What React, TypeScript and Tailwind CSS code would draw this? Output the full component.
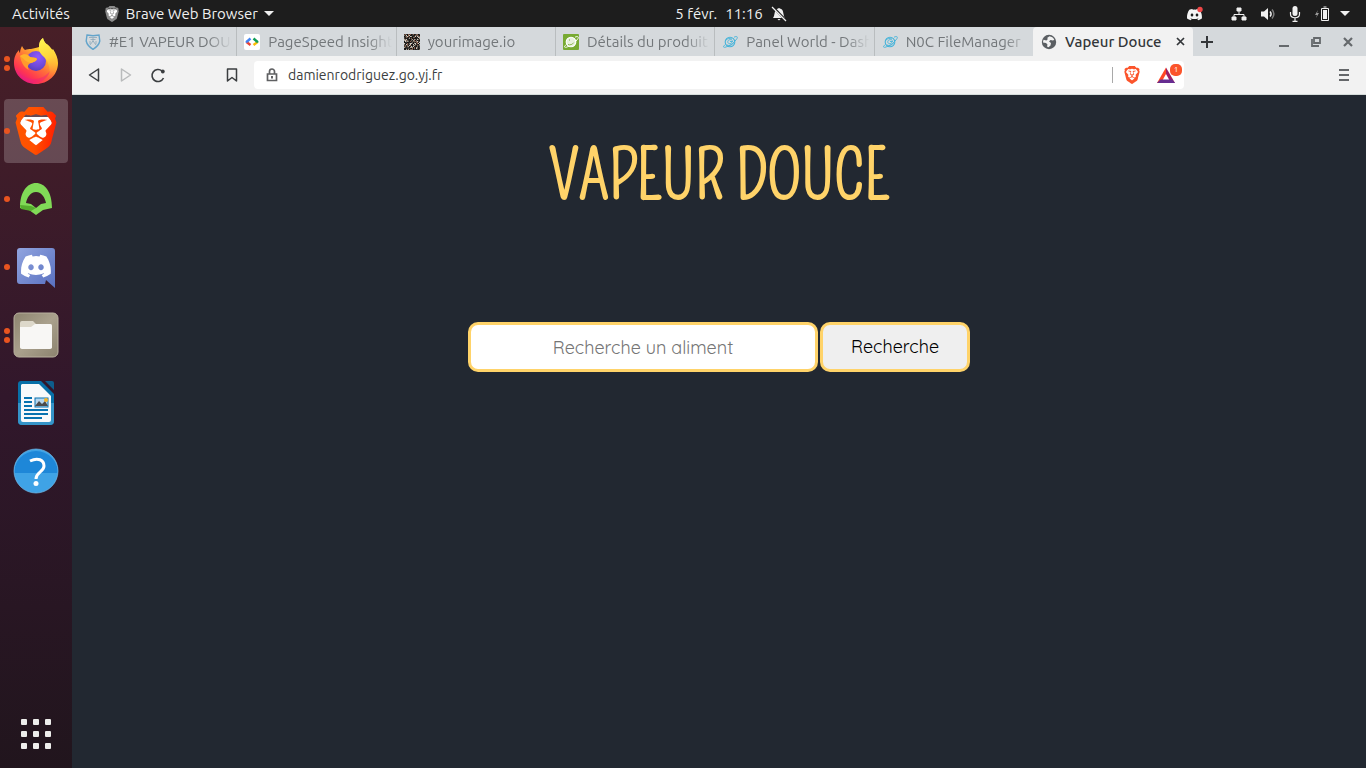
import type { ReactNode } from "react";
import { SiBrave } from "react-icons/si";

function BraveLogo({ size, fill }: { size: number; fill: string }) {
  return (
    <svg width={size} height={size} viewBox="0 0 24 24" aria-hidden="true">
      <defs>
        <linearGradient id="braveOrange" x1="0" y1="0.3" x2="1" y2="0.4">
          <stop offset="0" stopColor="#ff5601" />
          <stop offset="0.5" stopColor="#ff5000" />
          <stop offset="1" stopColor="#ff1f01" />
        </linearGradient>
      </defs>
      <path d="M5 5h14l1 3-2 9-6 4-6-4-2-9z" fill="#fff" />
      <SiBrave size={24} fill={fill} />
    </svg>
  );
}

function FirefoxLogo() {
  return (
    <svg width="46" height="48" viewBox="0 0 46 48" className="-mt-1" aria-hidden="true">
      <defs>
        <linearGradient id="ffBody" x1="0.85" y1="0.1" x2="0.25" y2="1">
          <stop offset="0" stopColor="#fff44f" />
          <stop offset="0.3" stopColor="#ffbd2d" />
          <stop offset="0.55" stopColor="#ff7139" />
          <stop offset="0.8" stopColor="#ff3750" />
          <stop offset="1" stopColor="#e31587" />
        </linearGradient>
        <linearGradient id="ffTail" x1="0.4" y1="0" x2="0.6" y2="1">
          <stop offset="0" stopColor="#fff44f" />
          <stop offset="0.5" stopColor="#ffd43a" />
          <stop offset="1" stopColor="#ff9640" stopOpacity="0" />
        </linearGradient>
        <radialGradient id="ffGlobe" cx="0.6" cy="0.3" r="0.8">
          <stop offset="0" stopColor="#9059ff" />
          <stop offset="0.6" stopColor="#6f4ad8" />
          <stop offset="1" stopColor="#4c3eb5" />
        </radialGradient>
      </defs>
      <path d="M9 9c1 2 2 3 3 4 2-1 4-1 6-1 3-1 6-1 8-2 0-4 1-7 4-9 1 5 4 6 6 8 1 1 2 3 3 4l1-1c3 5 5 9 5 14C45 38 35 47 23 47S1 38 1 26c0-6 2-10 5-13 0 1 0 2 1 3 0-3 1-5 2-7z" fill="url(#ffBody)" />
      <circle cx="23" cy="24" r="10" fill="url(#ffGlobe)" />
      <path d="M30 1c1 5 4 6 6 8 6 6 8 14 6 22-1 5-4 8-7 10 2-5 2-10 0-15-2-7-10-8-9-16 0-4 1-7 4-9z" fill="url(#ffTail)" />
      <path d="M7 19c4-3 8-2 10 1 3 1 6 0 7 2-1 3-4 3-6 4-3 1-4 4-2 7-5-2-8-8-9-14z" fill="#ff9a2c" />
      <path d="M7 19c4-3 8-2 10 1 3 1 6 0 7 2-1 3-4 3-6 4-4 0-7-4-11-7z" fill="#ffb32c" />
      <path d="M3 31c3 7 10 11 17 11 8 0 13-3 17-8-3 9-10 12-17 12C12 45 5 40 3 31z" fill="#ed217f" opacity=".45" />
    </svg>
  );
}

function HoodLogo() {
  return (
    <svg width="34" height="34" viewBox="0 0 34 34" aria-hidden="true">
      <path d="M17 1C8 1 1 10 1 26l9 2 7 5 7-5 9-2C33 10 26 1 17 1zm0 9c6 0 9 6 10 11l-5 1-5 4-5-4-5-1c1-5 4-11 10-11z" fill="#81da57" />
      <path d="M1 23l11 1 5 2-5 3-10-2z" fill="#56ad2e" />
    </svg>
  );
}

const DISCORD_FACE =
  "M20.3 4.4A19.8 19.8 0 0 0 15.4 3l-.6 1.3a18 18 0 0 0-5.5 0L8.7 3a19.8 19.8 0 0 0-5 1.4C.5 9.1-.3 13.7.1 18.2a20 20 0 0 0 6 3l1.3-2-2-1 .5-.4c3.900 1.800 8.200 1.800 12.100 0l.5.4-2 1 1.300 2a20 20 0 0 0 6-3c.5-5.200-.8-9.700-3.500-13.800zM8 15.300c-1.200 0-2.200-1.100-2.200-2.400S6.800 10.500 8 10.500s2.200 1.100 2.200 2.400-1 2.400-2.200 2.400zm8 0c-1.200 0-2.200-1.100-2.200-2.400s1-2.400 2.200-2.400 2.200 1.100 2.200 2.400-1 2.400-2.200 2.400z";

function DiscordLogo() {
  return (
    <svg width="40" height="42" viewBox="0 0 40 42" aria-hidden="true">
      <defs>
        <linearGradient id="discordBg" x1="0" y1="0" x2="1" y2="1">
          <stop offset="0" stopColor="#91a4df" />
          <stop offset="1" stopColor="#5870c0" />
        </linearGradient>
      </defs>
      <path d="M4 2h32a3 3 0 0 1 3 3v37l-9-8-1 4H4a3 3 0 0 1-3-3V5a3 3 0 0 1 3-3z" fill="url(#discordBg)" />
      <svg x="5" y="5" width="30" height="30" viewBox="0 0 24 24">
        <path d={DISCORD_FACE} fill="#fff" />
      </svg>
    </svg>
  );
}

function FilesLogo() {
  return (
    <svg width="46" height="46" viewBox="0 0 46 46" aria-hidden="true">
      <defs>
        <linearGradient id="filesBg" x1="0" y1="0" x2="1" y2="1">
          <stop offset="0" stopColor="#8d846f" />
          <stop offset="0.5" stopColor="#aaa18d" />
          <stop offset="1" stopColor="#8b826e" />
        </linearGradient>
      </defs>
      <rect x="1" y="1" width="44" height="44" rx="5" fill="url(#filesBg)" stroke="#b8b09e" />
      <path d="M9 9h11l3 3h14a2 2 0 0 1 2 2v22H7V11a2 2 0 0 1 2-2z" fill="#ddd8ca" />
      <path d="M7 15h11l4-3h15a2 2 0 0 1 2 2v21a2 2 0 0 1-2 2H9a2 2 0 0 1-2-2z" fill="#f8f7f5" />
    </svg>
  );
}

function WriterLogo() {
  return (
    <svg width="38" height="46" viewBox="0 0 38 46" aria-hidden="true">
      <path d="M4 1h20l13 13v27a4 4 0 0 1-4 4H5a4 4 0 0 1-4-4V4a3 3 0 0 1 3-3z" fill="#0870a8" />
      <path d="M1 23h36v18a4 4 0 0 1-4 4H5a4 4 0 0 1-4-4z" fill="#3594c8" />
      <path d="M5 4h17l12 12v24a2 2 0 0 1-2 2H6a2 2 0 0 1-2-2V5z" fill="#f8fafb" />
      <path d="M28 1h7a2 2 0 0 1 2 2v7z" fill="#0e5d8c" />
      <path d="M7 18h8M7 22h8M7 26h8M7 30h24M7 34h24M7 38h18" stroke="#0873b0" strokeWidth="2" />
      <rect x="18" y="18" width="13" height="9" fill="#b5d7ef" stroke="#0873b0" />
      <path d="M18 26l4-5 3 3 3-3 3 5z" fill="#4c4c4c" />
      <circle cx="29" cy="20" r="2" fill="#f3b329" />
    </svg>
  );
}

function HelpLogo() {
  return (
    <svg width="46" height="46" viewBox="0 0 46 46" aria-hidden="true">
      <circle cx="23" cy="23" r="22" fill="#3fa3e6" />
      <path d="M1 25a22 22 0 0 1 44 0z" fill="#1e87d8" />
      <circle cx="23" cy="23" r="22" fill="none" stroke="#72bdec" strokeWidth=".7" />
      <path d="M17 13c8-4 14-1 14 5 0 6-8 6-8 13" fill="none" stroke="#fff" strokeWidth="3" />
      <circle cx="23" cy="35.500" r="2.500" fill="#fff" />
    </svg>
  );
}

function ShieldFavicon() {
  return (
    <svg width="16" height="16" viewBox="0 0 16 16" aria-hidden="true" fill="none" stroke="#63a4cb">
      <path d="M2 1l6 .8L14 1l.8 6c-.8 4-3 6-6.800 8.300C4.200 13 2 11 1.200 7z" strokeWidth="1.400" />
      <path d="M4 3.500h8M5.500 5.500h5M5 11l3-4 3 4M5 7v3M11 7v3M8 4v4" stroke="#8aa7b9" strokeWidth=".8" />
    </svg>
  );
}

function PageSpeedFavicon() {
  return (
    <svg width="16" height="16" viewBox="0 0 16 16" aria-hidden="true">
      <rect width="16" height="16" rx="2" fill="#fff" />
      <g fill="none" strokeWidth="2.400">
        <path d="M6.500 4.500L2.500 8" stroke="#4285f4" />
        <path d="M2.500 8l4 3" stroke="#ea4335" />
        <path d="M9.500 4.500L13.500 8" stroke="#0f9d58" />
        <path d="M13.500 8l-4 3" stroke="#fbbc05" />
      </g>
      <path d="M1 8l2-1.500L4.500 8 3 9z" fill="#4285f4" />
      <path d="M15 8l-2-1.500L11.500 8 13 9z" fill="#0f9d58" />
    </svg>
  );
}

const MOSAIC = ["#191919", "#6f665d", "#a99e92", "#2c2723", "#151515", "#8a5f4c", "#393a38", "#d1cbc1", "#231f1c", "#4a4139", "#10100f"];

function MosaicFavicon() {
  return (
    <svg width="16" height="16" viewBox="0 0 16 16" aria-hidden="true" shapeRendering="crispEdges">
      <rect width="16" height="16" fill="#171717" />
      {Array.from({ length: 256 }, (_, i) => (
        <rect key={i} x={i % 16} y={Math.floor(i / 16)} width="1" height="1" fill={MOSAIC[((i * 7919 + 31) ^ (i * i * 13)) % 97 % 11]} />
      ))}
    </svg>
  );
}

function PlanetFavicon({ boxed = false }: { boxed?: boolean }) {
  const ink = boxed ? "#ffffff" : "#45b3d9";
  return (
    <svg width="16" height="16" viewBox="0 0 16 16" aria-hidden="true">
      {boxed && <rect width="16" height="16" rx="1" fill="#78aa32" />}
      <g fill="none" stroke={ink}>
        <circle cx="8" cy="8" r="4.800" fill={boxed ? "#e8f1dd" : "none"} strokeWidth="1.100" />
        <path d="M3.500 10.500C.5 12.500 1 14 4 13c4-1 9-5 11-8.500 1-2-.5-2.500-3-1.300" strokeWidth=".9" />
        {boxed ? (
          <path d="M5 10.500c2 1 4.500 0 6-2M6 6h1" stroke="#78aa32" strokeWidth=".9" />
        ) : (
          <path d="M10.500 6.500c-2-1.800-5-.5-4.700 1.700.3 2 3.700 2 4-.2M4 6c1.500-1.500 4-2 6-1M5 11c2 1 5 .5 6.500-2M8 7.500h3" strokeWidth=".9" />
        )}
      </g>
    </svg>
  );
}

function GlobeFavicon() {
  return (
    <svg width="16" height="16" viewBox="0 0 16 16" aria-hidden="true">
      <circle cx="8" cy="8" r="7.200" fill="#5b5f63" />
      <path d="M8.500 2.300c2 .3 3.800 1.500 4.800 3.400l-1.300.8-2.500-.5-1.500 1.500 2 1.500-.5 2.500-2 1.800-1.500-.7.500-2-1.500-1.500-3-.7c0-1 .2-1.900.6-2.700l2.800.8 1.500-1.500-.8-1z" fill="#f2f2f2" />
    </svg>
  );
}

function Sym({ children, w = 16, label }: { children: ReactNode; w?: number; label?: string }) {
  return (
    <svg width={w} height="16" viewBox={`0 0 ${w} 16`} fill="none" stroke="currentColor" strokeWidth="1.500" aria-label={label} aria-hidden={label ? undefined : true}>
      {children}
    </svg>
  );
}

const tabs: { title: string; icon: ReactNode }[] = [
  { title: "#E1 VAPEUR DOUCE", icon: <ShieldFavicon /> },
  { title: "PageSpeed Insights", icon: <PageSpeedFavicon /> },
  { title: "yourimage.io", icon: <MosaicFavicon /> },
  { title: "Détails du produit", icon: <PlanetFavicon boxed /> },
  { title: "Panel World - Dashboard", icon: <PlanetFavicon /> },
  { title: "N0C FileManager", icon: <PlanetFavicon /> },
];

const dock: { name: string; dots: number; icon: ReactNode; active?: boolean }[] = [
  { name: "Firefox", dots: 2, icon: <FirefoxLogo /> },
  { name: "Brave", dots: 1, icon: <BraveLogo size={48} fill="url(#braveOrange)" />, active: true },
  { name: "Robin", dots: 1, icon: <HoodLogo /> },
  { name: "Discord", dots: 1, icon: <DiscordLogo /> },
  { name: "Fichiers", dots: 2, icon: <FilesLogo /> },
  { name: "LibreOffice Writer", dots: 0, icon: <WriterLogo /> },
  { name: "Aide", dots: 0, icon: <HelpLogo /> },
];

function TopBar() {
  return (
    <header className="grid h-[27px] shrink-0 grid-cols-[1fr_auto_1fr] items-center bg-[#1d1d1d] text-[15px] leading-5 text-[#f0f0f0]">
      <div className="flex items-center pl-3">
        <button type="button">Activités</button>
        <button type="button" className="ml-[34px] flex items-center gap-1.5">
          <BraveLogo size={16} fill="#8c8c8c" />
          <span>Brave Web Browser</span>
          <svg width="10" height="5" viewBox="0 0 10 5" aria-hidden="true"><path d="M0 0h10L5 5z" fill="currentColor" /></svg>
        </button>
      </div>
      <button type="button" className="ml-24 flex items-center gap-2">
        <span>5 févr.</span>
        <span>11:16</span>
        <Sym label="Notifications désactivées">
          <path d="M2 12c2-2 1-8 4-9l2-1 2 1c3 1 2 7 4 9zM6.500 13h3l-1.500 1.500z" fill="currentColor" stroke="none" />
          <path d="M2 1l13 13.500" stroke="#1d1d1d" strokeWidth="2.500" />
          <path d="M1 1l14 14" strokeWidth="1.200" />
        </Sym>
      </button>
      <div className="flex items-center justify-end gap-[13px] pr-4">
        <svg width="18" height="16" viewBox="0 0 18 16" className="mr-3.5" aria-label="Discord">
          <svg x="1" y="1" width="15" height="15" viewBox="0 0 24 24"><path d={DISCORD_FACE} fill="#f4f4f4" /></svg>
          <circle cx="14" cy="3.500" r="2.700" fill="#f04747" />
        </svg>
        <Sym label="Réseau">
          <path d="M6 2h4v3H6zM1 11h4v3H1zM11 11h4v3h-4z" fill="currentColor" strokeWidth="1" />
          <path d="M8 5v3M3 11V8.500h10V11" strokeWidth="1" />
        </Sym>
        <Sym label="Volume">
          <path d="M1 5.500h3L8 2v12l-4-3.500H1z" fill="currentColor" stroke="none" />
          <path d="M10 5.500c1.300 1.500 1.300 3.500 0 5" />
          <path d="M12 3.500c2.500 3 2.500 6 0 9" opacity=".45" />
        </Sym>
        <Sym w={12} label="Micro">
          <rect x="3.500" y="0" width="5" height="10" rx="2.500" fill="currentColor" stroke="none" />
          <path d="M1.500 6v2c0 5 9 5 9 0V6M6 12v3M3.500 15.300h5" strokeWidth="1.200" />
        </Sym>
        <div className="flex items-center gap-2.5">
          <Sym label="Batterie">
            <path d="M4 4L1 9h2l-1 3 3-5H3z" fill="currentColor" stroke="none" opacity=".6" />
            <path d="M7.500 2.500h7v12h-7zM9.500 1h3" strokeWidth="1" />
            <path d="M9 4h4v9H9z" fill="currentColor" stroke="none" />
          </Sym>
          <svg width="10" height="5" viewBox="0 0 10 5" aria-hidden="true"><path d="M0 0h10L5 5z" fill="currentColor" /></svg>
        </div>
      </div>
    </header>
  );
}

function Dock() {
  return (
    <nav aria-label="Applications" className="flex w-[72px] shrink-0 flex-col gap-1 bg-linear-to-b from-[#481f27] via-[#31172b] to-[#21151d] px-1 pt-1 pb-0.5">
      {dock.map((item) => (
        <button
          key={item.name}
          type="button"
          aria-label={item.name}
          className={`relative flex size-16 items-center justify-center rounded-[4px] ${item.active ? "bg-white/20" : ""}`}
        >
          {item.icon}
          <span className="absolute inset-y-0 left-0 flex flex-col items-center justify-center gap-[3px]">
            {Array.from({ length: item.dots }, (_, i) => (
              <span key={i} className="size-1.5 rounded-full bg-[#e95420]" />
            ))}
          </span>
        </button>
      ))}
      <button type="button" aria-label="Afficher les applications" className="mt-auto flex size-16 items-center justify-center">
        <span className="grid grid-cols-3 gap-1.5">
          {Array.from({ length: 9 }, (_, i) => (
            <span key={i} className="size-1.5 rounded-[1px] bg-[#eeeeec]" />
          ))}
        </span>
      </button>
    </nav>
  );
}

function TabStrip() {
  return (
    <div className="flex h-[29px] bg-[#d5d9dc] pl-1.5 text-[15px] leading-5 text-[#73777a]">
      <div className="flex max-w-[1115px] min-w-0 flex-1">
        {tabs.map((tab, i) => (
          <button
            key={tab.title}
            type="button"
            className={`flex min-w-0 flex-1 items-center gap-2 pr-1 pl-[7px] text-left ${i < 5 ? "border-r border-[#b9bdbf]" : ""}`}
          >
            <span className="shrink-0">{tab.icon}</span>
            <span className="min-w-0 flex-1 overflow-hidden mask-r-from-80% whitespace-nowrap">{tab.title}</span>
          </button>
        ))}
        <div className="flex w-40 shrink-0 items-center gap-2 rounded-t-[4px] bg-[#f2f2f2] px-2 font-medium text-[#333639]">
          <span className="shrink-0"><GlobeFavicon /></span>
          <span className="min-w-0 flex-1 overflow-hidden whitespace-nowrap">Vapeur Douce</span>
          <button type="button" aria-label="Fermer l’onglet">
            <svg width="9" height="9" viewBox="0 0 9 9" stroke="currentColor" strokeWidth="1.700"><path d="M1 1l7 7M8 1l-7 7" /></svg>
          </button>
        </div>
      </div>
      <button type="button" aria-label="Nouvel onglet" className="px-2 text-[#333639]">
        <svg width="12" height="12" viewBox="0 0 12 12" stroke="currentColor" strokeWidth="2"><path d="M6 0v12M0 6h12" /></svg>
      </button>
      <div className="ml-auto flex items-center gap-5 pr-3 text-[#65696c]">
        <button type="button" aria-label="Réduire">
          <svg width="12" height="12" viewBox="0 0 12 12"><path d="M1 9h10v2H1z" fill="currentColor" /></svg>
        </button>
        <button type="button" aria-label="Restaurer">
          <svg width="12" height="12" viewBox="0 0 12 12" fill="none" stroke="currentColor" strokeWidth="1.800"><path d="M4 2h6v5H4zM2 3v7h7" /></svg>
        </button>
        <button type="button" aria-label="Fermer">
          <svg width="12" height="12" viewBox="0 0 12 12" stroke="currentColor" strokeWidth="2.200"><path d="M2 2l8 8M10 2l-8 8" /></svg>
        </button>
      </div>
    </div>
  );
}

function Toolbar() {
  return (
    <div className="flex h-[39px] items-center border-b border-[#d5dcda] bg-[#f2f2f2] pr-4 pl-3.5 text-[#3b3e40]">
      <div className="flex items-center gap-4">
        <button type="button" aria-label="Précédent"><Sym><path d="M12.500 2v12L3.500 8z" strokeLinejoin="round" /></Sym></button>
        <button type="button" aria-label="Suivant" className="text-[#b9bbbc]"><Sym><path d="M3.500 2v12l9-6z" strokeLinejoin="round" /></Sym></button>
        <button type="button" aria-label="Actualiser">
          <Sym><path d="M13.500 11A6 6 0 1 1 12 4" strokeWidth="1.600" /><circle cx="12.800" cy="4.500" r="1.900" fill="currentColor" stroke="none" /></Sym>
        </button>
      </div>
      <button type="button" aria-label="Ajouter un favori" className="ml-[58px]"><Sym><path d="M3.500 2h9v12L8 10.500 3.500 14z" strokeLinejoin="round" /></Sym></button>
      <div className="ml-3.5 flex h-7 max-w-[930px] min-w-0 flex-1 items-center rounded-[4px] bg-white pl-2.5">
        <Sym><path d="M3.500 7h9v6.500h-9zM5.500 7V4.500a2.500 2.500 0 0 1 5 0V7" stroke="#5f6062" strokeWidth="1.700" /><path d="M7 9h2v2.500H7z" fill="#5f6062" stroke="none" /></Sym>
        <input aria-label="Adresse" defaultValue="damienrodriguez.go.yj.fr" className="ml-2 min-w-0 flex-1 bg-transparent text-[14px] leading-5 outline-none" />
        <div className="flex items-center">
          <span className="h-4 w-px bg-[#a9a9a9]" />
          <button type="button" aria-label="Boucliers Brave" className="ml-2.5"><BraveLogo size={18} fill="#fb542b" /></button>
          <button type="button" aria-label="Récompenses Brave" className="relative mr-2 ml-[15px]">
            <svg width="20" height="18" viewBox="0 0 20 18" aria-hidden="true">
              <path d="M10 1.500L1 17h4l5-9z" fill="#ff4724" />
              <path d="M10 1.500L19 17h-4l-5-9z" fill="#9e1f63" />
              <path d="M1 17h18l-3-3.500H4.500z" fill="#662d91" />
            </svg>
            <span className="absolute -top-0.5 left-3.5 flex size-3 items-center justify-center rounded-[5px] bg-[#fb542b] text-[8px] leading-3 text-white">1</span>
          </button>
        </div>
      </div>
      <button type="button" aria-label="Menu" className="ml-auto text-[#65676a]">
        <svg width="12" height="14" viewBox="0 0 12 14" fill="currentColor"><path d="M1 1h10v2H1zM1 6h10v2H1zM1 11h10v2H1z" /></svg>
      </button>
    </div>
  );
}

export default function App() {
  return (
    <div className="flex min-h-screen flex-col font-['Ubuntu','Noto_Sans',sans-serif]">
      <TopBar />
      <div className="flex flex-1">
        <Dock />
        <div className="flex min-w-0 flex-1 flex-col">
          <TabStrip />
          <Toolbar />
          <main className="flex flex-1 flex-col items-center bg-[#222831] pt-9">
            <h1 className="font-['Pompiere','Liberation_Sans_Narrow','Liberation_Sans',sans-serif] text-[66px] leading-[91px] font-bold whitespace-nowrap text-[#ffd369]">VAPEUR DOUCE</h1>
            <form className="mt-[100px] flex gap-0.5 font-['Quicksand','Lato',sans-serif] text-[18px] leading-6" onSubmit={(e) => e.preventDefault()}>
              <input
                type="text"
                aria-label="Recherche un aliment"
                placeholder="Recherche un aliment"
                className="h-[50px] w-[350px] rounded-[10px] border-[3px] border-[#ffd369] bg-white text-center text-black outline-none placeholder:text-[#757575]"
              />
              <button type="submit" className="h-[50px] w-[150px] rounded-[10px] border-[3px] border-[#ffd369] bg-[#efefef] text-black">Recherche</button>
            </form>
          </main>
        </div>
      </div>
    </div>
  );
}
